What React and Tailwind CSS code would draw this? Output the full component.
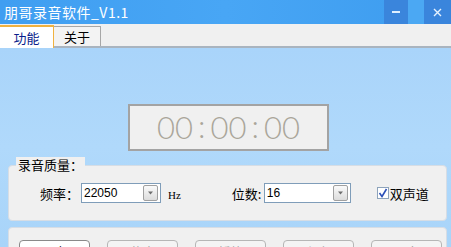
import React from 'react';

const cjk = { fontFamily: '"Noto Sans CJK SC", "Liberation Sans", sans-serif' };

const Select = ({ value, width }) => (
  <div className={`flex items-center h-[20px] ${width} bg-white border border-[#7f9db9] pl-[2px] pr-[2px]`}>
    <span className="flex-1 text-[12px] leading-none text-black" style={{ fontFamily: '"Liberation Sans", sans-serif' }}>{value}</span>
    <div className="w-[15px] h-[16px] border border-[#a0a0a0] rounded-[2px] bg-gradient-to-b from-[#fafafa] to-[#dcdcdc] flex items-center justify-center">
      <svg width="7" height="4" viewBox="0 0 7 4"><path d="M1 0.5 L6 0.5 L3.5 3.5 Z" fill="#6d6d6d" /></svg>
    </div>
  </div>
);

const Btn = ({ label, first }) => (
  <div className={`w-[71px] h-[24px] rounded-[4px] border ${first ? 'border-[#8a8a8a] bg-white' : 'border-[#b6b6b6] bg-[#f4f4f4]'} flex justify-center pt-[3px] text-[12px] leading-[16px] ${first ? 'text-black' : 'text-[#a0a0a0]'}`} style={cjk}>
    {label}
  </div>
);

export default function App() {
  return (
    <div className="w-[451px] h-[247px] overflow-hidden flex flex-col bg-[#abd6fa]" style={cjk}>
      {/* title bar */}
      <div className="h-[24px] shrink-0 flex items-stretch bg-gradient-to-r from-[#3f9ef1] via-[#48a6f5] to-[#3d9cef]">
        <div className="flex-1 flex items-center pl-[4px] text-white text-[14px] leading-[20px] tracking-[0.5px] whitespace-nowrap">朋哥录音软件_V1.1</div>
        <div className="w-[24px] bg-[#3a85dc] flex items-center justify-center">
          <div className="w-[8px] h-[2px] bg-[#dfefff]" />
        </div>
        <div className="w-[16px] bg-[#4ba8f3]" />
        <div className="w-[27px] bg-[#3a85dc] flex items-center justify-center">
          <svg width="9" height="9" viewBox="0 0 9 9"><path d="M1 1 L8 8 M8 1 L1 8" stroke="#e6f2ff" strokeWidth="1.4" /></svg>
        </div>
      </div>

      {/* tabs */}
      <div className="h-[24px] shrink-0 bg-[#f0f0f0] border-b-2 border-[#a9b4bf] flex items-end">
        <div className="w-[54px] h-[23px] bg-white border-t-2 border-[#f0b240] border-r border-[#a7a7a7] flex items-center justify-center text-[13px] leading-[18px] text-[#0a1e8c] mb-[-2px]">功能</div>
        <div className="w-[47px] h-[20px] bg-[#f3f3f3] border border-b-0 border-[#a7a7a7] border-l-0 flex items-center justify-center text-[13px] leading-[18px] text-black">关于</div>
      </div>

      {/* main */}
      <div className="flex-1 min-h-0 overflow-hidden flex flex-col bg-gradient-to-b from-[#a9d4fa] via-[#b0d9fb] to-[#a8d4f9]">
        <div className="shrink-0 ml-[128px] mt-[56px] w-[201px] h-[47px] border-2 border-[#a3a3a3] bg-[#f0f0f0] flex items-center justify-center text-[31px] font-light text-[#aaa69a] leading-none" style={{ fontFamily: 'Lato, "DejaVu Sans", sans-serif' }}>
          <span>00</span>
          <span className="mx-[5px] mb-[3px]">:</span>
          <span>00</span>
          <span className="mx-[5px] mb-[3px]">:</span>
          <span>00</span>
        </div>

        <div className="shrink-0 relative ml-[8px] mt-[14px] w-[439px] h-[56px] bg-[#f0f0f0] border border-[#d6dde5] rounded-[4px]">
          <div className="absolute left-[7px] top-[-9px] px-[2px] text-[13px] leading-[16px] text-black bg-[#f0f0f0] whitespace-nowrap">录音质量：</div>
          <div className="flex items-center mt-[17px]">
            <span className="ml-[31px] w-[41px] text-[13px] text-black whitespace-nowrap">频率：</span>
            <Select value="22050" width="w-[80px]" />
            <span className="ml-[7px] mt-[4px] text-[11px] text-black" style={{ fontFamily: '"Liberation Serif", serif' }}>Hz</span>
            <span className="ml-[51px] w-[32px] text-[13px] text-black whitespace-nowrap">位数:</span>
            <Select value="16" width="w-[87px]" />
            <div className="ml-[26px] w-[12px] h-[12px] border border-[#8da3bb] bg-white flex items-center justify-center">
              <svg width="10" height="10" viewBox="0 0 10 10"><path d="M1.5 5 L4 8.5 L8.5 1" stroke="#2b4fb8" strokeWidth="1.6" fill="none" /></svg>
            </div>
            <span className="ml-[1px] text-[13px] text-black whitespace-nowrap">双声道</span>
          </div>
        </div>

        <div className="shrink-0 ml-[8px] mt-[6px] w-[439px] h-[40px] bg-[#f0f0f0] border border-[#d6dde5] rounded-[4px] flex gap-[17px] pl-[10px] pt-[12px]">
          <Btn label="录音" first />
          <Btn label="停止" />
          <Btn label="播放" />
          <Btn label="保存" />
          <Btn label="退出" />
        </div>
      </div>
    </div>
  );
}
